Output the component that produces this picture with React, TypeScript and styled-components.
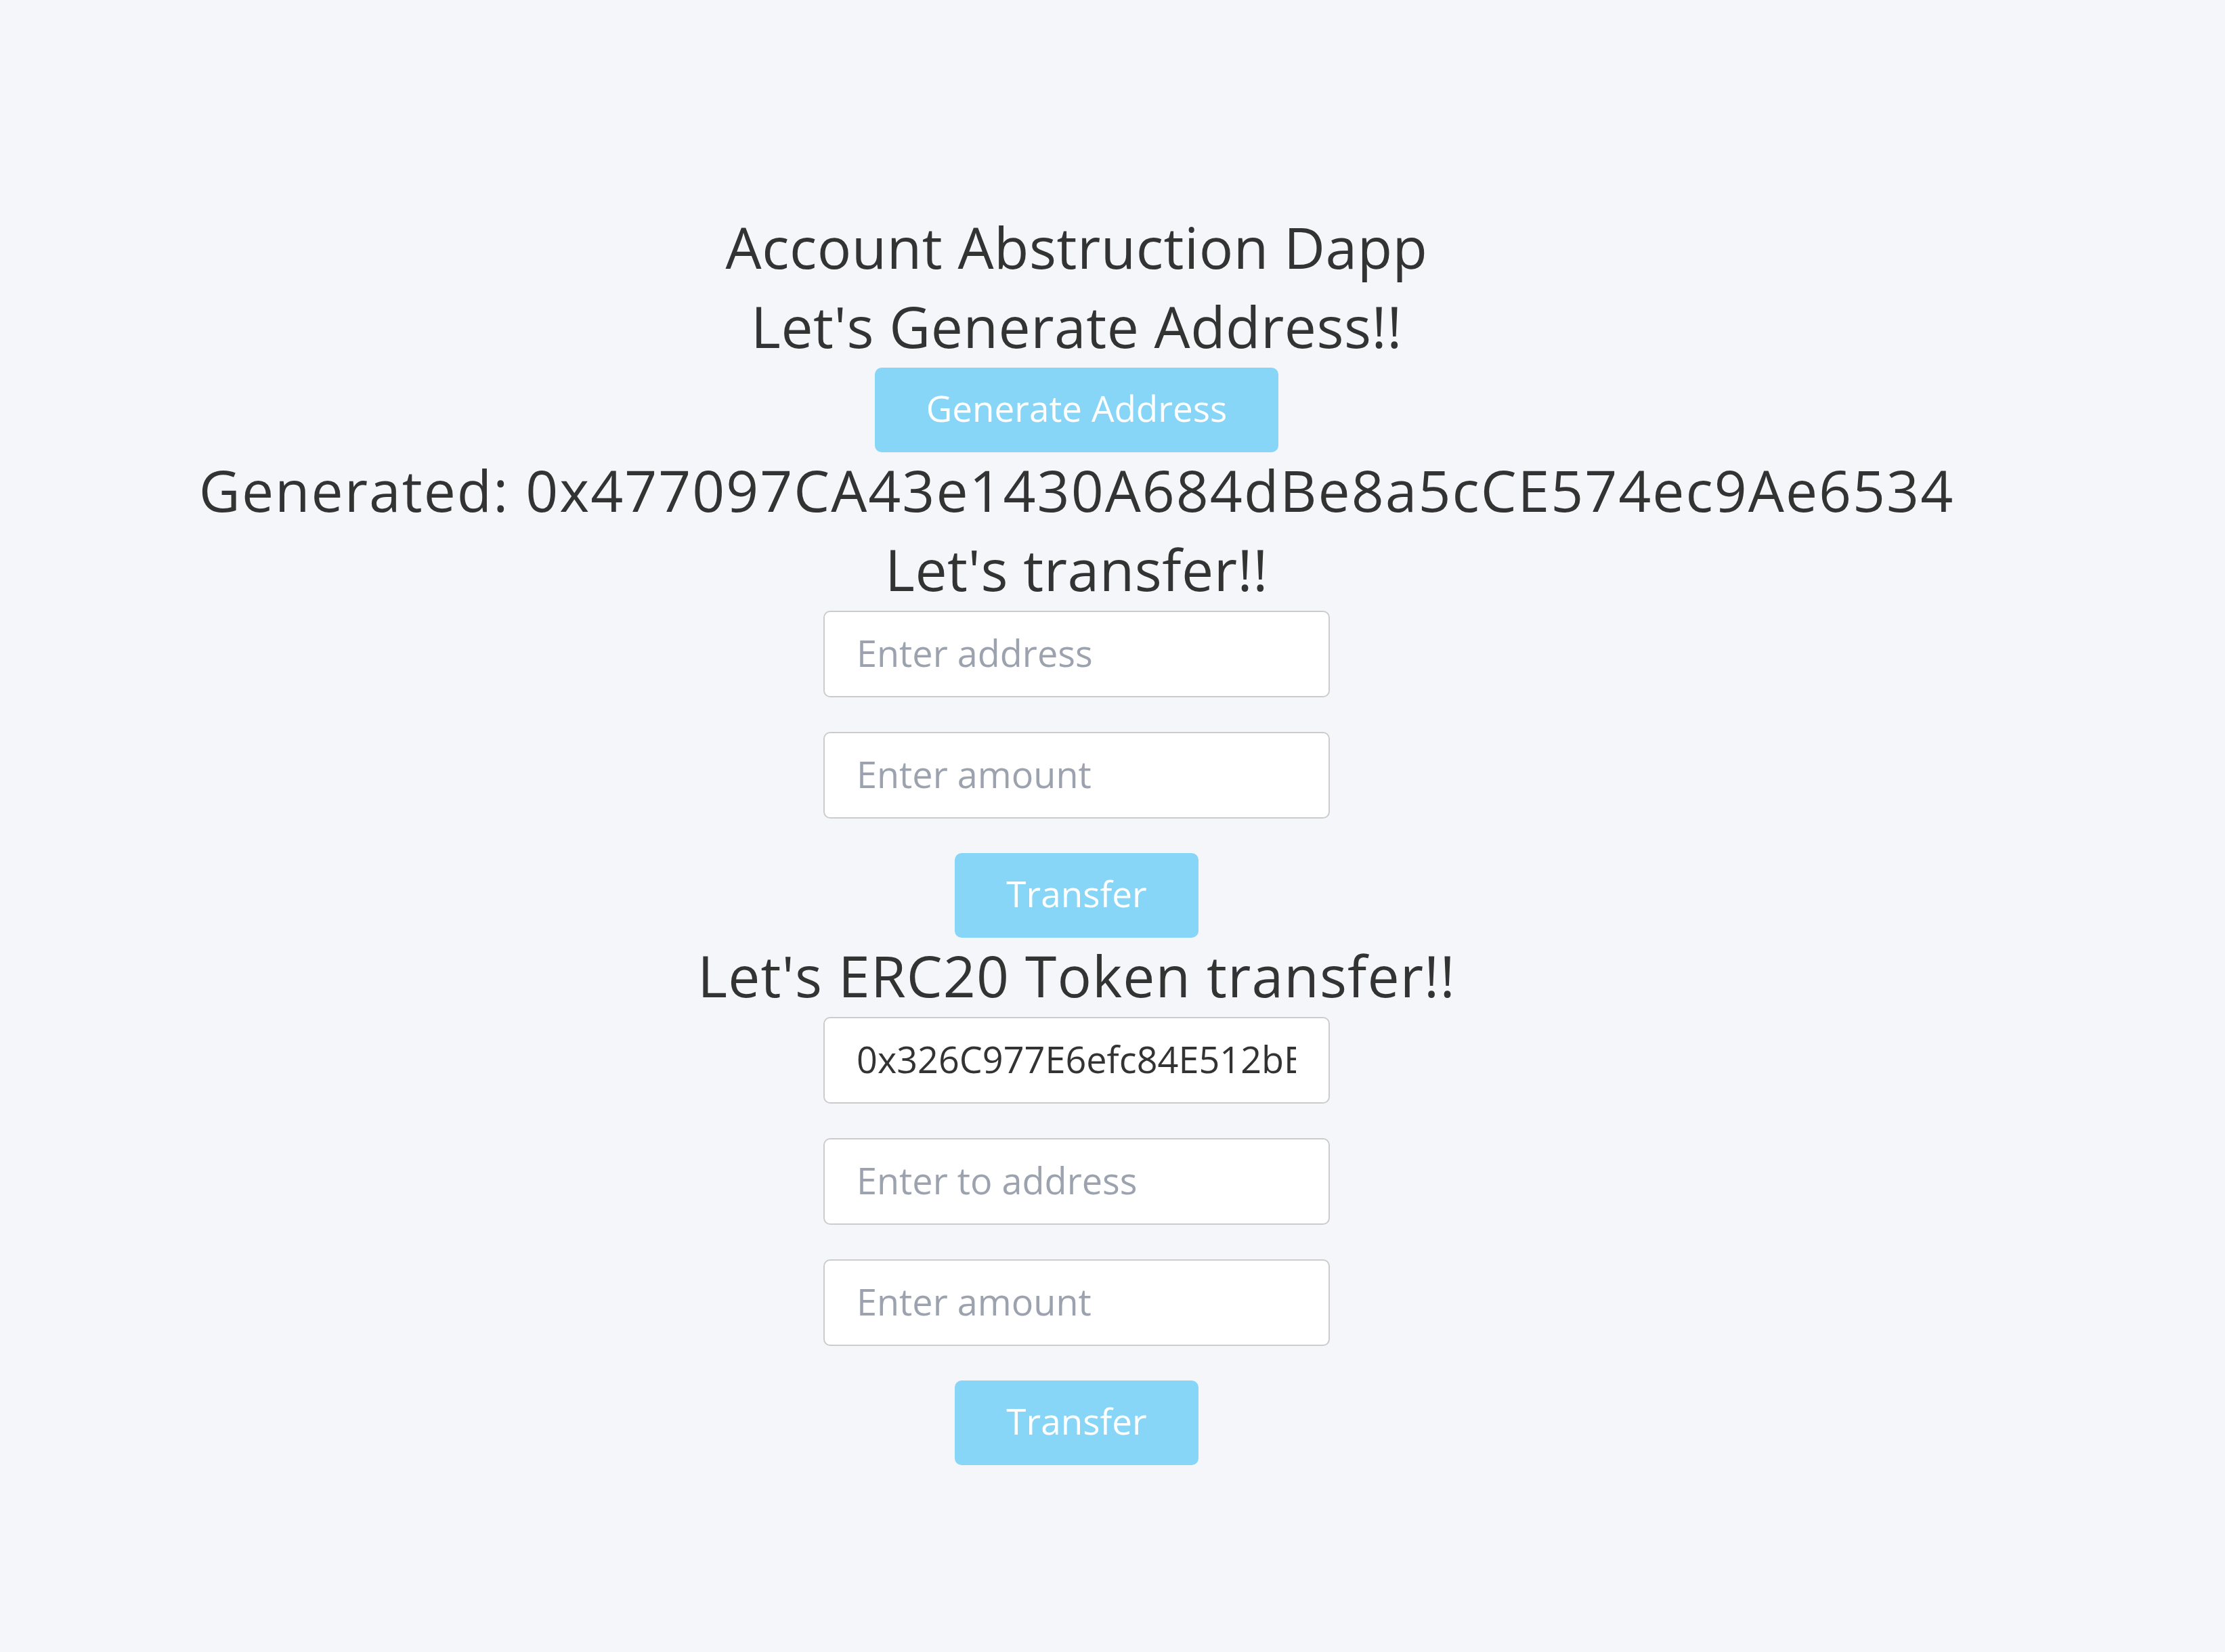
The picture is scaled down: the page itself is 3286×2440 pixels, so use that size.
import React from "react";
import styled, { createGlobalStyle } from "styled-components";

const GlobalStyle = createGlobalStyle`
  html, body {
    margin: 0;
    padding: 0;
    background: #f5f6fa;
  }
  body {
    font-family: "Open Sans", "Noto Sans CJK JP", sans-serif;
    color: #333333;
  }
  * { box-sizing: border-box; }
`;

const Page = styled.main`
  min-height: 2440px;
  padding: 309px 106px 0 0;
  display: flex;
  flex-direction: column;
  align-items: center;
`;

const Heading = styled.h1<{ $spacing?: number }>`
  margin: 0;
  height: 117px;
  padding-bottom: 6px;
  font-size: 84px;
  line-height: 111px;
  font-weight: 400;
  color: #333333;
  letter-spacing: ${(p) => p.$spacing ?? 0.5}px;
  white-space: nowrap;
  text-align: center;
`;

const Form = styled.div`
  display: flex;
  flex-direction: column;
  align-items: center;
  gap: 51px;
`;

const Input = styled.input`
  width: 748px;
  height: 128px;
  padding: 0 48px 4px 47px;
  border: 2px solid #cccccc;
  border-radius: 10px;
  background: #ffffff;
  font-family: "Open Sans", "Noto Sans CJK JP", sans-serif;
  font-size: 54px;
  color: #333333;
  outline: none;
  &::placeholder {
    color: #9ca3af;
    opacity: 1;
  }
`;

const Button = styled.button`
  height: 125px;
  padding: 0 76px 6px;
  border: none;
  border-radius: 10px;
  background: #87d6f7;
  color: #ffffff;
  font-family: "Open Sans", "Noto Sans CJK JP", sans-serif;
  font-size: 53px;
  line-height: 119px;
  font-weight: 400;
  cursor: pointer;
`;

export default function App() {
  return (
    <>
      <GlobalStyle />
      <Page>
        <Heading>Account Abstruction Dapp</Heading>
        <Heading>Let's Generate Address!!</Heading>
        <Button>Generate Address</Button>
        <Heading $spacing={2}>
          Generated: 0x477097CA43e1430A684dBe8a5cCE574ec9Ae6534
        </Heading>
        <Heading>Let's transfer!!</Heading>
        <Form>
          <Input placeholder="Enter address" />
          <Input placeholder="Enter amount" />
          <Button>Transfer</Button>
        </Form>
        <Heading $spacing={1.1}>Let's ERC20 Token transfer!!</Heading>
        <Form>
          <Input defaultValue="0x326C977E6efc84E512bB9C30f76E30c160eD06FB" />
          <Input placeholder="Enter to address" />
          <Input placeholder="Enter amount" />
          <Button>Transfer</Button>
        </Form>
      </Page>
    </>
  );
}
